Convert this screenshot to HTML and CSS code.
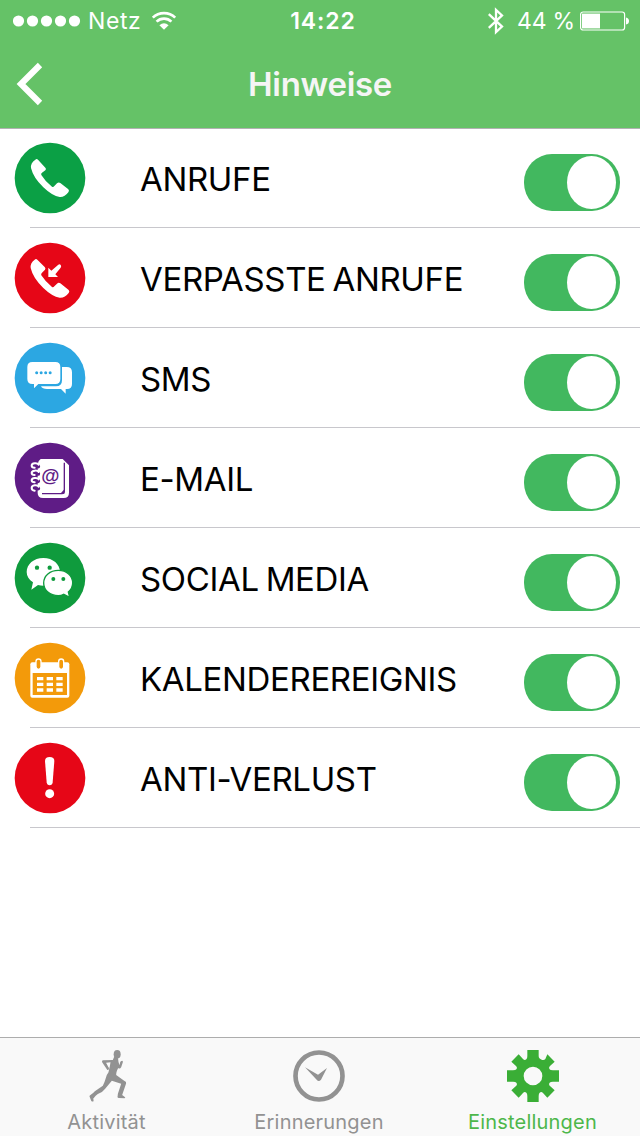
FILE: index.html
```
<!DOCTYPE html>
<html lang="de">
<head>
    <meta charset="UTF-8">
    <meta name="viewport" content="width=device-width, initial-scale=1.0">
    <title>Hinweise</title>
    <link rel="stylesheet" href="styles.css">
</head>
<body>
    <header class="header">
        <div class="status-bar">
            <div class="status-left">
                <svg class="signal" width="68" height="12" viewBox="0 0 68 12">
                    <circle cx="5.5" cy="6" r="5.6"/><circle cx="19.5" cy="6" r="5.6"/><circle cx="33.5" cy="6" r="5.6"/><circle cx="47.5" cy="6" r="5.6"/><circle cx="61.5" cy="6" r="5.6"/>
                </svg>
                <span class="carrier">Netz</span>
                <svg class="wifi" width="26" height="20" viewBox="0 0 26 20">
                    <path d="M1.8 6.6a16 16 0 0 1 22.4 0M5.6 10.6a10.6 10.6 0 0 1 14.8 0" fill="none" stroke="#fff" stroke-width="2.7"/>
                    <path d="M8.4 14.2q4.6-3.8 9.2 0L13 18.8z"/>
                </svg>
            </div>
            <div class="time">14:22</div>
            <div class="status-right">
                <svg class="bluetooth" width="18" height="28" viewBox="0 0 18 28">
                    <path d="M1.8 7.2L15 19.6 9 25.2V2.8l6 5.6L1.8 20.8" fill="none" stroke="#fff" stroke-width="2.3"/>
                </svg>
                <span class="percent">44 %</span>
                <svg class="battery" width="50" height="20" viewBox="0 0 50 20">
                    <rect x=".6" y="1" width="44" height="18" rx="2.5" fill="none" stroke="#fff" stroke-width="1.2"/>
                    <rect x="2" y="2.6" width="18" height="14.8"/>
                    <path d="M46 6.5q3 .5 3 3.5t-3 3.5z"/>
                </svg>
            </div>
        </div>
        <nav class="nav-bar">
            <a class="back-button" href="#" aria-label="Zurück">
                <svg width="28" height="44" viewBox="0 0 28 44">
                    <path d="M24 3L5 22l19 19" fill="none" stroke="#fff" stroke-width="6.2"/>
                </svg>
            </a>
            <h1>Hinweise</h1>
        </nav>
    </header>

    <ul class="list">
        <li class="row">
            <svg class="icon" viewBox="42 36 216 216">
                <circle cx="150" cy="144" r="106" fill="#0ba045"/>
                <path d="M106 89q4-4 8 0l22 24q4 4 0 8l-10 7q-4 3-2 7 12 20 32 35 4 2 7-2l8-8q5-5 10-1l24 19q4 4 0 9-11 15-26 14-22-3-49-29-30-29-37-58-2-15 13-25z" fill="#fff"/>
            </svg>
            <span class="label">ANRUFE</span>
            <span class="toggle"></span>
        </li>
        <li class="row">
            <svg class="icon" viewBox="42 36 216 216">
                <circle cx="150" cy="144" r="106" fill="#e60617"/>
                <path d="M104 89q4-4 8 0l22 22q4 4 1 8l-9 9q-4 4-2 8 12 19 32 35 4 2 7-2l8-8q5-5 10-1l25 20q4 4 0 9-11 15-27 14-22-3-49-29-31-30-38-60-2-15 12-25z" fill="#fff"/>
                <path d="M145 113v28h29l-8-8 16-20q3-4 0-8t-8 0l-20 17z" fill="#fff"/>
            </svg>
            <span class="label">VERPASSTE ANRUFE</span>
            <span class="toggle"></span>
        </li>
        <li class="row">
            <svg class="icon" viewBox="42 36 216 216">
                <circle cx="150" cy="144" r="106" fill="#2ca7e2"/>
                <path d="M186 111h14q16 0 16 16v35q0 15-15 15h-4v14l-14-14h-42q-14 0-18-8h45q18 0 18-18z" fill="#fff"/>
                <path d="M97 96h69q15 0 15 15v36q0 15-15 15h-51l-13 13v-13h-5q-15 0-15-15v-36q0-15 15-15z" fill="#fff"/>
                <g fill="#2ca7e2">
                    <circle cx="110" cy="128" r="4.500"/><circle cx="123.500" cy="128" r="4.500"/><circle cx="137" cy="128" r="4.500"/><circle cx="150.500" cy="128" r="4.500"/>
                </g>
            </svg>
            <span class="label">SMS</span>
            <span class="toggle"></span>
        </li>
        <li class="row">
            <svg class="icon" viewBox="42 36 216 216">
                <circle cx="150" cy="144" r="106" fill="#5f1c86"/>
                <path d="M122 87h66l19 19v82q0 16-16 16h-62q-16 0-16-16v-85q0-10 9-16z" fill="#fff"/>
                <path d="M193 98v86q0 7-7 7h-60" fill="none" stroke="#5f1c86" stroke-width="4"/>
                <path d="M181 191l12-13v13z" fill="#5f1c86"/>
                <g fill="none" stroke="#5f1c86" stroke-width="13" stroke-linecap="round">
                    <path d="M103 109h11M103 131h11M103 153h11M103 175h11"/>
                </g>
                <g fill="none" stroke="#fff" stroke-width="6" stroke-linecap="round">
                    <path d="M116 104q-3-5-12-4-9 1-9 7t9 6M116 126q-3-5-12-4-9 1-9 7t9 6M116 148q-3-5-12-4-9 1-9 7t9 6M116 170q-3-5-12-4-9 1-9 8t9 8"/>
                </g>
                <text class="at-sign" x="151" y="157" text-anchor="middle">@</text>
            </svg>
            <span class="label">E-MAIL</span>
            <span class="toggle"></span>
        </li>
        <li class="row">
            <svg class="icon" viewBox="42 36 216 216">
                <circle cx="150" cy="144" r="106" fill="#0f9b3d"/>
                <path d="M130 84c29 0 50 19 50 42s-21 41-50 41q-8 0-16-2l-20 14 5-22c-12-8-19-18-19-31 0-23 21-42 50-42z" fill="#fff"/>
                <path d="M175 121c25 0 43 16 43 38 0 11-5 20-13 27l4 16-18-9q-7 4-16 4c-25 0-44-16-44-38s19-38 44-38z" fill="#fff" stroke="#0f9b3d" stroke-width="4"/>
                <g fill="#0f9b3d">
                    <circle cx="111" cy="113" r="6.500"/><circle cx="149" cy="113" r="6.500"/><circle cx="160" cy="147" r="6"/><circle cx="190" cy="147" r="6"/>
                </g>
            </svg>
            <span class="label">SOCIAL MEDIA</span>
            <span class="toggle"></span>
        </li>
        <li class="row">
            <svg class="icon" viewBox="42 36 216 216">
                <circle cx="150" cy="144" r="106" fill="#f39a0a"/>
                <path d="M97 97h105q6 0 6 6v94q0 6-6 6H97q-6 0-6-6v-94q0-6 6-6z" fill="#fff"/>
                <path d="M98 129h103v66H98z" fill="#f39a0a"/>
                <g fill="#f39a0a" stroke="#fff" stroke-width="4">
                    <rect x="108" y="87" width="15" height="31" rx="7.500"/><rect x="176" y="87" width="15" height="31" rx="7.500"/>
                </g>
                <path d="M111 141h19v10h-19zM140 141h19v10h-19zM169 141h19v10h-19zM111 158h19v10h-19zM140 158h19v10h-19zM169 158h19v10h-19zM111 175h19v10h-19zM140 175h19v10h-19zM169 175h19v10h-19z" fill="#fff"/>
            </svg>
            <span class="label">KALENDEREREIGNIS</span>
            <span class="toggle"></span>
        </li>
        <li class="row">
            <svg class="icon" viewBox="42 36 216 216">
                <circle cx="150" cy="144" r="106" fill="#e60617"/>
                <path d="M135 93q0-12 14-12t14 12l-5 64q-1 9-9 9t-9-9z" fill="#fff"/>
                <circle cx="149" cy="191" r="13.500" fill="#fff"/>
            </svg>
            <span class="label">ANTI-VERLUST</span>
            <span class="toggle"></span>
        </li>
    </ul>

    <footer class="tab-bar">
        <a class="tab" href="#">
            <svg viewBox="91.5 60 156 156">
                <ellipse cx="200" cy="73" rx="10.500" ry="13"/>
                <path d="M191 80l-4 10-30 1q-4 2-2 6l15 22q3 2 5-1 2-4-2-8l-6-12 13-1-2 12-4 18q-6 7-9 20-3 11-8 20l-24 17q-5 6-14 12-4 1-1 6l4 10q3 4 7 2 1-4-1-8 8-10 14-14 15-6 22-16l20-24 28 9-10 31q0 4-1 8 0 4 4 4l17 1q5-2 0-5l-7-5 11-32q3-7-4-10l-25-18q0-6 2-12l4-9q5 4 9-2l5-15q1-5-2-5-5 0-6 5l-2 9-3-10q0-10-4-15z"/>
                <path d="M168 99h9l-2 11z" fill="#f9f9f9"/>
            </svg>
            <span>Aktivität</span>
        </a>
        <a class="tab" href="#">
            <svg viewBox="0 0 156 156">
                <circle cx="78" cy="78" r="70.500" fill="none" stroke="#929292" stroke-width="14"/>
                <path d="M36 52l39 22 27-20-18 35q-7 8-13 0z"/>
            </svg>
            <span>Erinnerungen</span>
        </a>
        <a class="tab active" href="#">
            <svg viewBox="0 0 156 156">
                <path d="M61 0h34v18q0 8 9 11 7 3 11-2l6-14 22 22-14 13q-5 5-1 10 1 3 10 3h18v34h-18q-8 0-10 3-4 5 1 10l14 13-22 22-13-14q-5-5-10-1-3 2-3 10v18H61v-18q0-8-3-10-5-4-10 1l-13 14-22-22 14-13q5-5 1-10-2-3-10-3H0V61h18q8 0 10-3 4-5-1-10L13 35l22-22 13 14q5 5 10 1 3-2 3-10zM78 50a28 28 0 1 0 0 56 28 28 0 0 0 0-56z" fill-rule="evenodd"/>
            </svg>
            <span>Einstellungen</span>
        </a>
    </footer>
</body>
</html>
```
FILE: styles.css
```
* {
    box-sizing: border-box;
}
body {
    font-family: Inter, "Liberation Sans", sans-serif;
    margin: 0;
    background: #ffffff;
    color: #000000;
    display: flex;
    flex-direction: column;
    height: 1136px;
}
svg {
    display: block;
    flex-shrink: 0;
}
a {
    text-decoration: none;
}
.header {
    height: 128px;
    background-color: #65c267;
    box-shadow: 0 1px 0 #b2b2b2;
    position: relative;
    z-index: 1;
}
.status-bar {
    height: 40px;
    display: grid;
    grid-template-columns: 1fr 80px 1fr;
    align-items: center;
    font-size: 23px;
    line-height: 40px;
    color: #ffffff;
    fill: #ffffff;
}
.status-left,
.status-right {
    display: flex;
    align-items: center;
    height: 40px;
}
.status-left {
    padding-left: 13px;
}
.carrier {
    width: 52px;
    margin: 1px 11px 0 7px;
    letter-spacing: 0.6px;
}
.time {
    margin-top: 1px;
    padding-left: 6px;
    text-align: center;
    font-weight: 600;
    letter-spacing: 0.9px;
}
.status-right {
    justify-content: flex-end;
    padding-right: 10px;
}
.bluetooth {
    margin-right: 12px;
}
.percent {
    width: 58px;
    margin: 1px 5px 0 0;
    white-space: nowrap;
    letter-spacing: -0.2px;
}
.nav-bar {
    height: 88px;
    display: grid;
    grid-template-columns: 80px 1fr 80px;
    align-items: center;
}
.back-button {
    padding-left: 16px;
}
h1 {
    margin: 0;
    text-align: center;
    font-size: 33px;
    font-weight: 600;
    letter-spacing: -0.3px;
    color: #f5f5f5;
}
.list {
    list-style: none;
    margin: 0;
    padding: 0;
    flex: 1;
}
.row {
    display: flex;
    align-items: flex-start;
    height: 100px;
    margin-left: 30px;
    padding-right: 20px;
    border-bottom: 1px solid #c8c7cc;
}
.icon {
    width: 72px;
    height: 72px;
    margin: 14px 54px 0 -16px;
}
.at-sign {
    font-family: "Liberation Sans", sans-serif;
    font-size: 56px;
    font-weight: bold;
    fill: #5f1c86;
}
.label {
    flex: 1;
    font-size: 33px;
    line-height: 40px;
    margin-top: 31px;
    letter-spacing: -0.35px;
    word-spacing: -2px;
}
.toggle {
    width: 96px;
    height: 57px;
    margin-top: 26px;
    padding: 2px 4px 2px 43px;
    border-radius: 28px;
    background-color: #42b85f;
}
.toggle::before {
    content: "";
    display: block;
    height: 53px;
    border-radius: 50%;
    background: #ffffff;
}
.tab-bar {
    height: 99px;
    display: grid;
    grid-template-columns: 213px 212px 215px;
    border-top: 1px solid #adadad;
    background-color: #f9f9f9;
}
.tab {
    display: flex;
    flex-direction: column;
    align-items: center;
    padding-top: 12px;
    font-size: 20px;
    line-height: 24px;
    letter-spacing: 0.2px;
    color: #929292;
    fill: #929292;
}
.tab svg {
    width: 52px;
    height: 52px;
    margin-bottom: 8px;
}
.tab.active {
    color: #4db74b;
    fill: #3aae36;
}
```
